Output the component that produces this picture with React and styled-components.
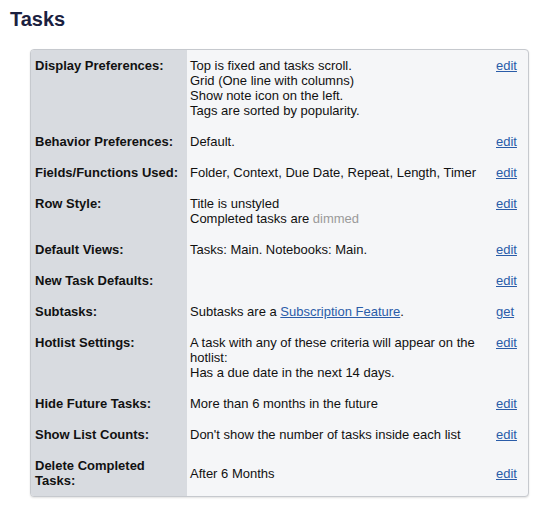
import React from 'react';
import styled, { createGlobalStyle } from 'styled-components';

const GlobalStyle = createGlobalStyle`
  body {
    margin: 0;
    padding: 7px 10px;
    background: #fff;
    font-family: "Liberation Sans", Helvetica, Arial, sans-serif;
    font-size: 13px;
    color: #111;
  }
`;

const Title = styled.h1`
  margin: 0;
  font-size: 20px;
  line-height: 24px;
  font-weight: bold;
  color: #1b2140;
`;

const SettingsTable = styled.table`
  margin: 18px 0 0 20px;
  width: 499px;
  border-collapse: separate;
  border-spacing: 0;
  border: 1px solid #c6c9ce;
  border-radius: 4px;
  overflow: hidden;
  box-shadow: 0 1px 2px rgba(0, 0, 0, 0.12);
  background: #f5f6f8;
  font-size: 13px;
  line-height: 15px;
`;

const Row = styled.tr``;

const Label = styled.td`
  width: 148px;
  padding: 8px 4px;
  vertical-align: top;
  background: #d8dbe0;
  font-weight: bold;
  color: #111;
`;

const Value = styled.td`
  padding: 8px 6px 8px 3px;
  vertical-align: ${(p) => (p.$middle ? 'middle' : 'top')};
  color: #111;
`;

const Action = styled.td`
  width: 21px;
  padding: 8px 11px 8px 4px;
  vertical-align: ${(p) => (p.$middle ? 'middle' : 'top')};
`;

const Line = styled.div``;

const Link = styled.a`
  color: #2a5ca8;
  text-decoration: underline;
`;

const Dim = styled.span`
  color: #9a9a9a;
`;

const rows = [
  {
    label: 'Display Preferences:',
    value: [
      'Top is fixed and tasks scroll.',
      'Grid (One line with columns)',
      'Show note icon on the left.',
      'Tags are sorted by popularity.',
    ],
    action: 'edit',
  },
  { label: 'Behavior Preferences:', value: ['Default.'], action: 'edit' },
  {
    label: 'Fields/Functions Used:',
    value: ['Folder, Context, Due Date, Repeat, Length, Timer'],
    action: 'edit',
  },
  {
    label: 'Row Style:',
    value: ['Title is unstyled', <>Completed tasks are <Dim>dimmed</Dim></>],
    action: 'edit',
  },
  { label: 'Default Views:', value: ['Tasks: Main. Notebooks: Main.'], action: 'edit' },
  { label: 'New Task Defaults:', value: [], action: 'edit' },
  {
    label: 'Subtasks:',
    value: [<>Subtasks are a <Link href="#">Subscription Feature</Link>.</>],
    action: 'get',
  },
  {
    label: 'Hotlist Settings:',
    value: [
      'A task with any of these criteria will appear on the hotlist:',
      'Has a due date in the next 14 days.',
    ],
    action: 'edit',
  },
  { label: 'Hide Future Tasks:', value: ['More than 6 months in the future'], action: 'edit' },
  {
    label: 'Show List Counts:',
    value: ["Don't show the number of tasks inside each list"],
    action: 'edit',
  },
  { label: 'Delete Completed Tasks:', value: ['After 6 Months'], action: 'edit', middle: true },
];

export default function App() {
  return (
    <>
      <GlobalStyle />
      <Title>Tasks</Title>
      <SettingsTable>
        <tbody>
          {rows.map((row) => (
            <Row key={row.label}>
              <Label>{row.label}</Label>
              <Value $middle={row.middle}>
                {row.value.map((line, i) => (
                  <Line key={i}>{line}</Line>
                ))}
              </Value>
              <Action $middle={row.middle}>
                <Link href="#">{row.action}</Link>
              </Action>
            </Row>
          ))}
        </tbody>
      </SettingsTable>
    </>
  );
}
